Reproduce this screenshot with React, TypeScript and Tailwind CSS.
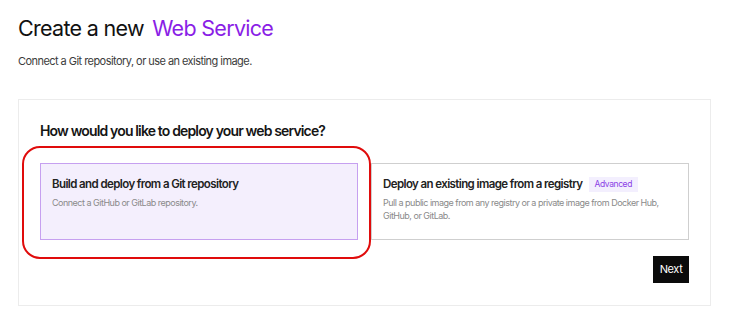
export default function App() {
  return (
    <div
      className="min-h-[331px] w-[740px] bg-white px-[18px] pt-[12px] text-[#111]"
      style={{ fontFamily: "Inter, 'Liberation Sans', sans-serif" }}
    >
      <h1 className="text-[21.5px] leading-[32px] font-normal tracking-[-0.7px]">
        Create a new <span className="ml-[3px] text-[#8a1ee6]">Web Service</span>
      </h1>
      <p className="mt-[9px] text-[11px] leading-[16px] tracking-[-0.55px] text-[#3c3c3c]">
        Connect a Git repository, or use an existing image.
      </p>

      <div className="mt-[30px] w-[693px] border border-[#ececec] px-[21px] pt-[21px] pb-[22px]">
        <h2 className="text-[14px] leading-[20px] font-semibold tracking-[-0.85px] text-[#151515]">
          How would you like to deploy your web service?
        </h2>

        <div className="relative mt-[22px] flex gap-[13px]">
          <div className="pointer-events-none absolute -left-[18px] -top-[17px] h-[113px] w-[349px] rounded-[18px] border-2 border-[#e00c0c]" />
          <div className="h-[77px] w-[318px] border border-[#c6a0f0] bg-[#f4effd] px-[11px] pt-[12px]">
            <p className="text-[11.5px] leading-[16px] font-semibold tracking-[-0.6px] text-[#222]">
              Build and deploy from a Git repository
            </p>
            <p className="mt-[4px] text-[9px] leading-[14px] tracking-[-0.5px] text-[#8a8a8a]">
              Connect a GitHub or GitLab repository.
            </p>
          </div>
          <div className="h-[77px] w-[318px] border border-[#cfcfcf] bg-white px-[11px] pt-[12px]">
            <div className="flex items-center gap-[6px]">
              <p className="text-[11.5px] leading-[16px] font-semibold tracking-[-0.6px] text-[#222]">
                Deploy an existing image from a registry
              </p>
              <span className="bg-[#f3effe] px-[6px] py-[1px] text-[8.5px] leading-[13px] tracking-[-0.4px] text-[#8b3fe6]">
                Advanced
              </span>
            </div>
            <p className="mt-[4px] text-[9px] leading-[13px] tracking-[-0.5px] text-[#8a8a8a]">
              Pull a public image from any registry or a private image from Docker Hub, GitHub, or GitLab.
            </p>
          </div>
        </div>

        <div className="mt-[16px] flex justify-end">
          <button className="h-[27px] w-[36px] bg-[#0b0b0b] text-[11px] tracking-[-0.4px] text-white">
            Next
          </button>
        </div>
      </div>
    </div>
  );
}
